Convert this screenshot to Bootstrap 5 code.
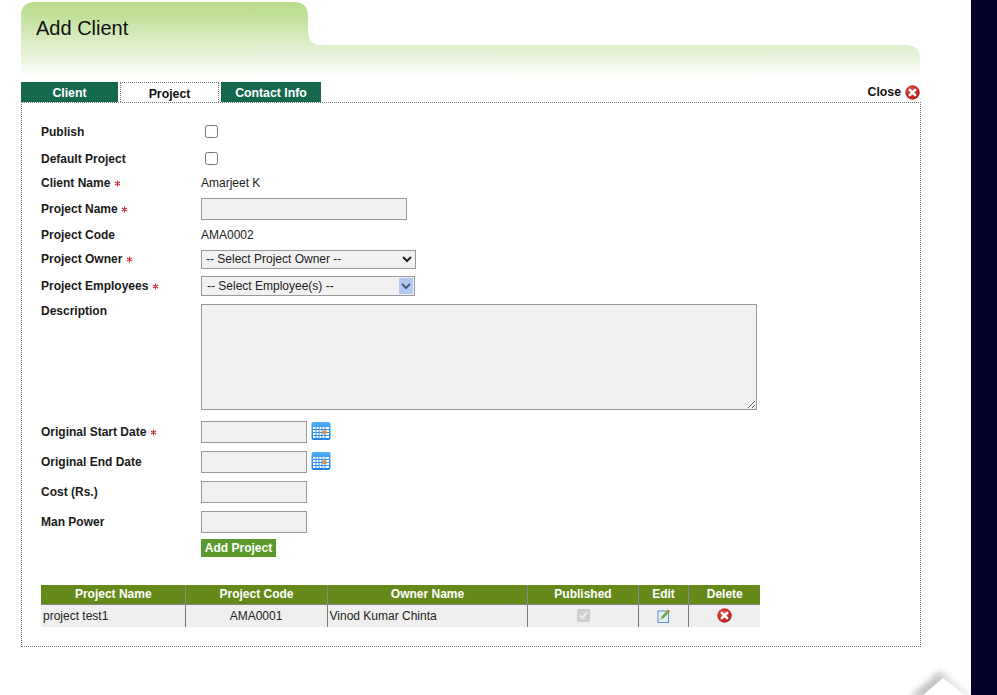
<!DOCTYPE html>
<html lang="en"><head><meta charset="utf-8"><title>Add Client</title>
<link href="https://cdn.jsdelivr.net/npm/bootstrap@5.3.0/dist/css/bootstrap.min.css" rel="stylesheet">
<style>
html,body{height:100%;overflow:hidden}
body{font:12px/14px "Liberation Sans",Arial,sans-serif;color:#111;background:#fff}
.pagewrap{width:997px;height:695px}
.mainpane{width:971px;padding:2px 50px 0 21px;overflow:hidden}
.sidestrip{width:26px;background:#03002a}
.headshape{height:76px;padding:14px 0 0 15px}
.headshape svg{left:0;top:0}
.headtitle{font:20px/24px "Liberation Sans",Arial,sans-serif;color:#111;margin:0;position:relative}
.tabbar{height:20px;margin-top:4px}
.tabitem{height:20px;font-weight:700;font-size:12.3px;line-height:22px;text-align:center;padding:0;border-radius:0}
.tabitem.dark,.tabitem.dark:hover{background:#14684e;color:#fff}
.tabitem.current,.tabitem.current:hover{background:#fff;color:#111;border:1px dotted #777;border-bottom:0;line-height:22px}
.w1{width:97px}.w2{width:99px;margin:0 2px}.w3{width:100px}
.closelink{color:#111;font-weight:700;font-size:12.3px;text-decoration:none;gap:4px;height:20px;margin-right:1px}
.formbox{border:1px dotted #777;height:545px;padding:15px 19px 0}
.frow{display:flex;align-items:center}
.flabel{width:160px;flex:none;font-weight:700;color:#1a1a1a}
.star{margin-left:0;vertical-align:0}
.plain{color:#222}
.up1{margin-top:-2px}
.dn1{padding-top:2px}
.calbtn{margin-top:-2px}
.fld.form-control,.fld.form-select{border:1px solid #999;border-radius:0;background-color:#f1f1f1;padding:1px 4px;font-size:12px;line-height:14px;min-height:0;color:#222;box-shadow:none}
.natsel.form-select{appearance:auto;background-image:none;width:215px;height:19px;padding:0 0 1px 0}
.mulsel.form-select{width:214px;height:20px;padding:0 0 0 5px;border-width:1px;background-size:14px 16px;background-position:right 1px center;background-image:url("data:image/svg+xml,%3Csvg xmlns='http://www.w3.org/2000/svg' viewBox='0 0 14 16'%3E%3Crect width='14' height='16' fill='%23b4c9f2'/%3E%3Cpath d='M3 6l4 4 4-4' fill='none' stroke='%234a5a80' stroke-width='2'/%3E%3C/svg%3E")}
.txt206{width:206px;height:22px}
.txt106{width:106px;height:22px}
.area556{width:556px;height:106px}
.addbtn.btn{background:#5b9a2a;border:0;border-radius:0;color:#fff;font-weight:700;font-size:12px;line-height:14px;padding:2px 3px;height:18px;width:75px;white-space:nowrap}
.gridtbl.table{width:719px;margin:28px 0 0;table-layout:fixed;border-collapse:collapse;font-size:12px;line-height:14px}
.gridtbl th{background:#668a1a;color:#fff;height:19px;padding:0 0 0 1px;text-align:center;vertical-align:middle;font-weight:700;border:0;border-left:1px solid #888;border-bottom:1px solid #888;box-shadow:none}
.gridtbl td{background:#efefef;color:#222;height:23px;padding:0 2px;border:0;border-left:1px solid #777;vertical-align:middle;box-shadow:none}
.gridtbl th:first-child,.gridtbl td:first-child{border-left:0}
.gridtbl input{display:block;margin:0 auto}
.gridtbl svg{display:block;margin:0 auto}
.gridtbl .cellshift{padding-left:4px}
.cornerfold{position:absolute;left:880px;top:650px}
</style></head>
<body class="position-relative">
<svg width="0" height="0" class="position-absolute"><defs>
<linearGradient id="hg" x1="0" y1="0" x2="0" y2="1"><stop offset="0" stop-color="#bbdd8f"/><stop offset=".15" stop-color="#bfdf97"/><stop offset="1" stop-color="#fff"/></linearGradient>
<radialGradient id="rd" cx=".4" cy=".35" r=".75"><stop offset="0" stop-color="#e8504a"/><stop offset="1" stop-color="#a81414"/></radialGradient>
<linearGradient id="cal" x1="0" y1="0" x2="0" y2="1"><stop offset="0" stop-color="#4fb0f5"/><stop offset="1" stop-color="#1d82e6"/></linearGradient>
<symbol id="xicon" viewBox="0 0 15 15"><circle cx="7.5" cy="7.5" r="7.2" fill="url(#rd)"/><path d="M4.8 4.8l5.4 5.4M10.2 4.8l-5.4 5.4" stroke="#fff" stroke-width="2.6" stroke-linecap="round"/></symbol>
<symbol id="calicon" viewBox="0 0 20 20"><rect x=".5" y="1" width="19" height="18" rx="2" fill="url(#cal)"/><rect x="2" y="6" width="16" height="11" fill="#fff"/><path d="M2 8.5h16M2 11.5h16M2 14.5h16M5 6v11M8 6v11M11 6v11M14 6v11" stroke="#3a8fe8"/><rect x="12" y="9.5" width="3.5" height="3.5" fill="#f08a24"/></symbol>
<symbol id="staricon" viewBox="0 0 7 7"><path d="M3.5.5v6M.9 2l5.2 3M.9 5l5.2-3" stroke="#c8323c" stroke-width="1.1"/></symbol>
</defs></svg>
<div class="pagewrap d-flex">
<div class="mainpane flex-shrink-0">
  <div class="headshape position-relative">
    <svg class="position-absolute" width="899" height="76" viewBox="0 0 899 76"><path d="M0 76V14Q0 0 14 0H273Q287 0 287 14V29Q287 43 301 43H885Q899 43 899 57V76Z" fill="url(#hg)"/></svg>
    <h1 class="headtitle">Add Client</h1>
  </div>
  <div class="tabbar d-flex align-items-end">
    <a class="tabitem dark w1 text-decoration-none" href="#">Client</a>
    <a class="tabitem current w2 text-decoration-none" href="#">Project</a>
    <a class="tabitem dark w3 text-decoration-none" href="#">Contact Info</a>
    <a class="closelink ms-auto d-flex align-items-center" href="#">Close <svg width="15" height="15"><use href="#xicon"/></svg></a>
  </div>
  <div class="formbox">
    <div class="frow" style="height:27px"><div class="flabel">Publish</div><input type="checkbox" class="ms-1"></div>
    <div class="frow" style="height:26px"><div class="flabel dn1">Default Project</div><input type="checkbox" class="ms-1"></div>
    <div class="frow" style="height:25px"><div class="flabel up1">Client Name <svg class="star" width="7" height="7"><use href="#staricon"/></svg></div><div class="plain up1">Amarjeet K</div></div>
    <div class="frow" style="height:26px"><div class="flabel">Project Name <svg class="star" width="7" height="7"><use href="#staricon"/></svg></div><input class="fld form-control txt206" type="text"></div>
    <div class="frow" style="height:25px"><div class="flabel">Project Code</div><div class="plain">AMA0002</div></div>
    <div class="frow" style="height:25px"><div class="flabel up1">Project Owner <svg class="star" width="7" height="7"><use href="#staricon"/></svg></div><select class="fld form-select natsel"><option>-- Select Project Owner --</option></select></div>
    <div class="frow" style="height:27px"><div class="flabel">Project Employees <svg class="star" width="7" height="7"><use href="#staricon"/></svg></div><select class="fld form-select mulsel"><option>-- Select Employee(s) --</option></select></div>
    <div class="d-flex" style="height:118px;padding-top:5px"><div class="flabel">Description</div><textarea class="fld form-control area556"></textarea></div>
    <div class="frow" style="height:30px"><div class="flabel">Original Start Date <svg class="star" width="7" height="7"><use href="#staricon"/></svg></div><input class="fld form-control txt106" type="text"><svg class="ms-1 calbtn" width="20" height="20"><use href="#calicon"/></svg></div>
    <div class="frow" style="height:30px"><div class="flabel">Original End Date</div><input class="fld form-control txt106" type="text"><svg class="ms-1 calbtn" width="20" height="20"><use href="#calicon"/></svg></div>
    <div class="frow" style="height:30px"><div class="flabel">Cost (Rs.)</div><input class="fld form-control txt106" type="text"></div>
    <div class="frow" style="height:30px"><div class="flabel">Man Power</div><input class="fld form-control txt106" type="text"></div>
    <div class="frow align-items-end" style="height:20px"><div class="flabel"></div><button class="btn addbtn" type="button">Add Project</button></div>
    <table class="table gridtbl">
      <colgroup><col style="width:144px"><col style="width:142px"><col style="width:200px"><col style="width:111px"><col style="width:50px"><col style="width:72px"></colgroup>
      <thead><tr><th>Project Name</th><th>Project Code</th><th>Owner Name</th><th>Published</th><th>Edit</th><th>Delete</th></tr></thead>
      <tbody><tr><td>project test1</td><td class="text-center">AMA0001</td><td>Vinod Kumar Chinta</td><td class="cellshift"><input type="checkbox" checked disabled></td>
      <td class="cellshift"><svg width="14" height="14" viewBox="0 0 14 14"><rect x="1" y="2" width="10.5" height="11.5" fill="#e6f0fb" stroke="#5b8fcf"/><path d="M3 11l1-3 6-6.5 2 2L6 10z" fill="#6ab04a"/><path d="M10 1.5l1.2-1 2 2-1.2 1z" fill="#e8663a"/><path d="M3 11l1-3 2 2z" fill="#f0d090"/></svg></td>
      <td><svg width="15" height="15"><use href="#xicon"/></svg></td></tr></tbody>
    </table>
  </div>
</div>
<div class="sidestrip flex-shrink-0"></div>
</div>
<svg class="cornerfold" width="91" height="45" viewBox="0 0 91 45"><defs><filter id="bl" x="-30%" y="-50%" width="160%" height="200%"><feGaussianBlur stdDeviation="3"/></filter></defs><path d="M63 22L78 34L92 48H60z" fill="#e8e8e8" filter="url(#bl)"/><path d="M61 20L28 48H72z" fill="#c4c4c4" filter="url(#bl)"/><path d="M63 28L42 46H86z" fill="#fff"/></svg>
</body></html>
